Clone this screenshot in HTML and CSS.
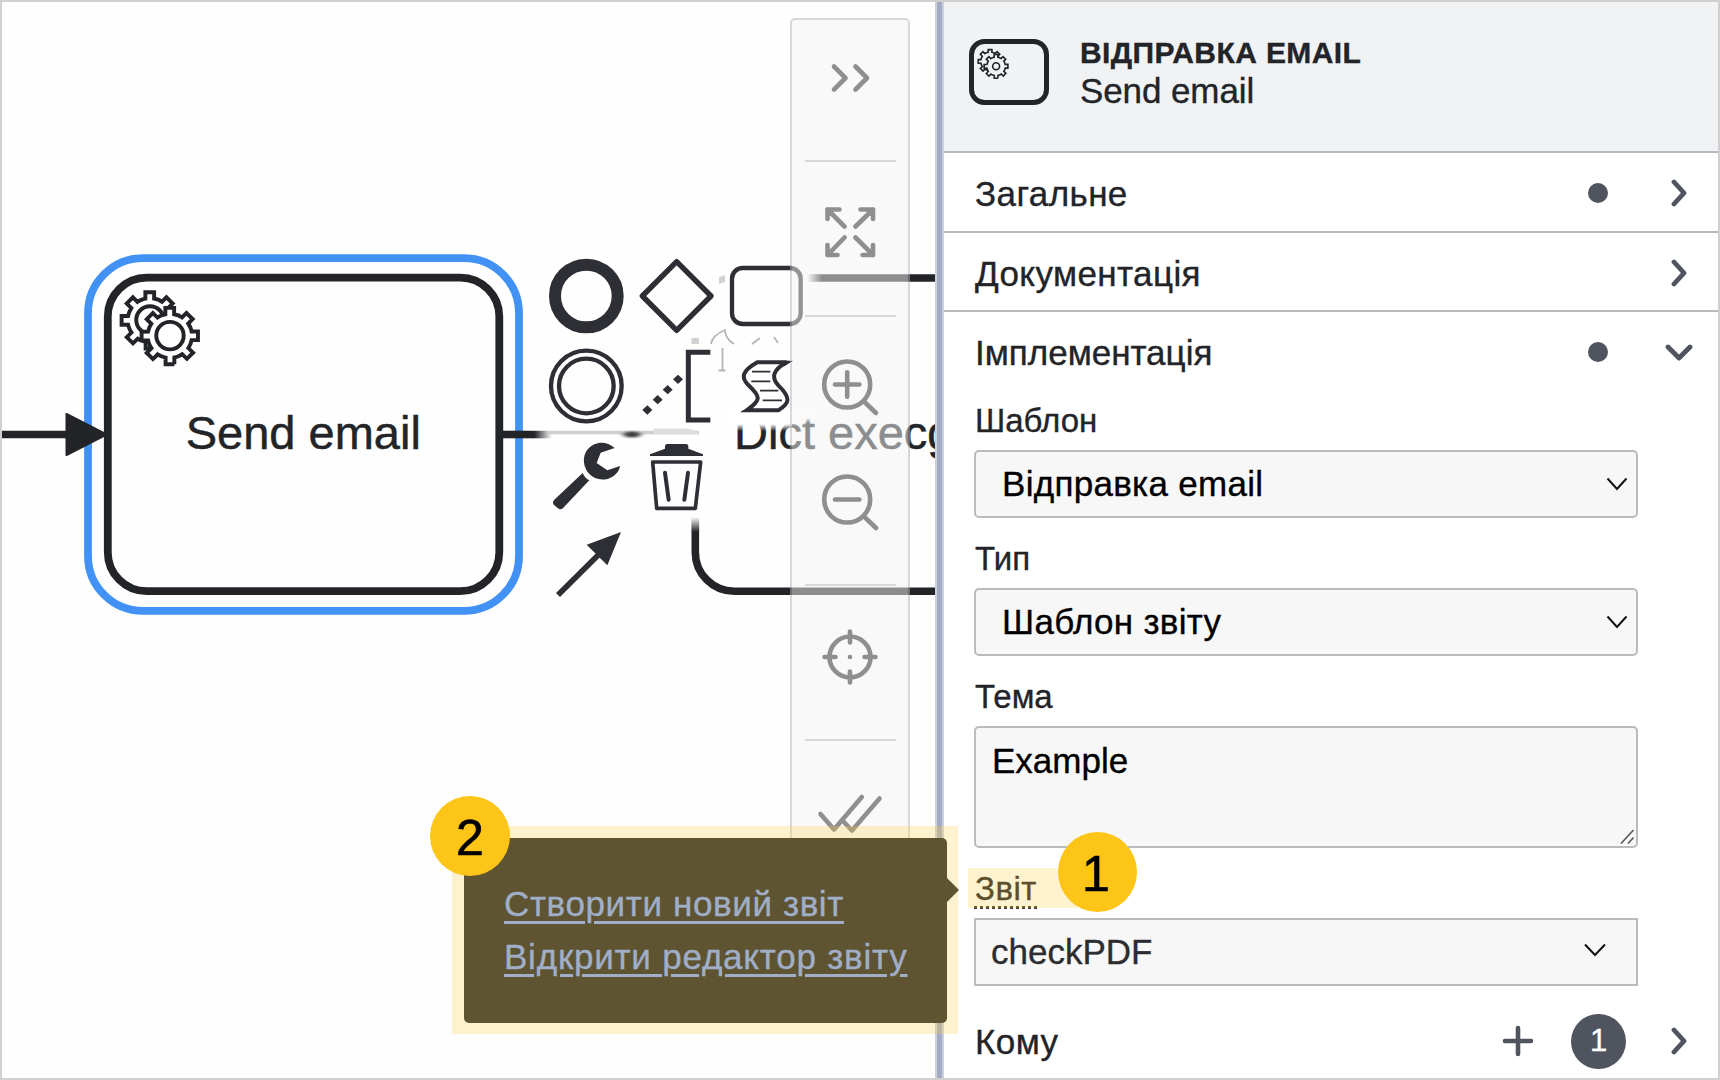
FILE: index.html
```html
<!DOCTYPE html>
<html lang="uk">
<head>
<meta charset="utf-8">
<title>Send email</title>
<link rel="stylesheet" href="styles.css">
</head>
<body>
<div class="frame">
  <main class="canvas">
    <svg class="diagram" viewBox="2 2 933 1076" width="933" height="1076">
      <defs>
        <path id="gear" d="m 12,18 v -1.71335 c 0.352326,-0.0705 0.703932,-0.17838 1.047628,-0.32133 0.344416,-0.14465 0.665822,-0.32133 0.966377,-0.52145 l 1.19431,1.18005 1.567487,-1.57688 -1.195028,-1.18014 c 0.403376,-0.61394 0.683079,-1.29908 0.825447,-2.01824 l 1.622133,-0.01 v -2.2196 l -1.636514,0.01 c -0.07333,-0.35153 -0.178319,-0.70024 -0.323564,-1.04372 -0.145244,-0.34406 -0.321407,-0.6644 -0.522735,-0.96217 l 1.131035,-1.13631 -1.583305,-1.56293 -1.129598,1.13589 c -0.614052,-0.40108 -1.302883,-0.68093 -2.022633,-0.82247 l 0.0093,-1.61852 h -2.241173 l 0.0042,1.63124 c -0.353763,0.0736 -0.705369,0.17977 -1.049785,0.32371 -0.344415,0.14437 -0.665102,0.32092 -0.9635006,0.52006 l -1.1698628,-1.15823 -1.5667691,1.5792 1.1684265,1.15669 c -0.4026573,0.61283 -0.68308,1.29797 -0.8247287,2.01713 l -1.6588041,0.003 v 2.22174 l 1.6724648,-0.006 c 0.073327,0.35077 0.1797598,0.70243 0.3242851,1.04472 0.1452428,0.34448 0.3214064,0.6644 0.5227339,0.96066 l -1.1993431,1.19723 1.5840256,1.56011 1.1964668,-1.19348 c 0.6140517,0.40346 1.3028827,0.68232 2.0233517,0.82331 l 7.19e-4,1.69892 h 2.226848 z"/>
        <linearGradient id="fadeRight"><stop offset="0" stop-color="#222428"/><stop offset=".2" stop-color="#222428"/><stop offset="1" stop-color="#222428" stop-opacity="0"/></linearGradient>
        <linearGradient id="fadeIn"><stop offset="0" stop-color="#222428" stop-opacity="0"/><stop offset="1" stop-color="#222428"/></linearGradient>
        <linearGradient id="fadeDown" x2="0" y2="1"><stop offset="0" stop-color="#222428" stop-opacity="0"/><stop offset="1" stop-color="#222428"/></linearGradient>
        <linearGradient id="veil" x2="0" y2="1"><stop offset="0" stop-color="#fff"/><stop offset=".7" stop-color="#fff"/><stop offset="1" stop-color="#fff" stop-opacity="0"/></linearGradient>
        <radialGradient id="smudge"><stop offset="0" stop-color="#2e2f32"/><stop offset=".4" stop-color="#3a3b3e" stop-opacity=".8"/><stop offset="1" stop-color="#c9c9c9" stop-opacity="0"/></radialGradient>
      </defs>

      <!-- incoming and outgoing flows -->
      <path class="flow" d="M2 434.5H70"/>
      <rect x="88" y="258.2" width="431" height="352.7" rx="55" class="selection"/>
      <path class="solid" d="M66.500 414l40 20.500-40 20.500z" stroke-linejoin="round" stroke="#222428" stroke-width="2"/>
      <rect x="107.800" y="277.600" width="391.500" height="313.600" rx="39" class="task"/>
      <path class="flow" d="M503 434.500H530"/>
      <rect x="530" y="430.800" width="22" height="7.500" fill="url(#fadeRight)"/>
      <path d="M548 432.500H699" stroke="#cfcfcf" stroke-width="3.500"/>
      <path d="M654 428.500H688l10 3v3H654z" fill="#dedede"/>
      <ellipse cx="632" cy="434.500" rx="15" ry="5" fill="url(#smudge)"/>

      <g transform="translate(107.300 278) scale(3.92)" class="gears">
        <use href="#gear"/><circle cx="10.890" cy="10.700" r="3.500"/>
        <g transform="translate(5.100 4)"><use href="#gear"/><circle cx="10.890" cy="10.700" r="3.500"/></g>
      </g>
      <text class="task-name" x="303.300" y="449" text-anchor="middle">Send email</text>

      <!-- following task, partly covered -->
      <path class="flow" d="M822 278H936M695.300 532V552.200A39 39 0 0 0 734.300 591.200H936"/>
      <rect x="807" y="274.200" width="15" height="7.600" fill="url(#fadeIn)"/>
      <rect x="691.400" y="517" width="7.800" height="15" fill="url(#fadeDown)"/>
      <text class="task-name" x="734" y="449">Dict execg</text>
      <rect x="728" y="408" width="64" height="23" fill="url(#veil)"/>
      <rect x="792" y="408" width="13" height="18" fill="url(#veil)"/>
      <rect x="805" y="406" width="12" height="17" fill="url(#veil)"/>
      <path d="M719 277l6-2v7l-6 2zM691.500 338h7.500v6h-7.500z" fill="#d2d2d2"/>
      <path class="trace" d="M711 344c1-7 7-11 14-14 0 6 4 11 9 14M752 344l8-6M774 337l4 6"/>
      <path class="trace" d="M722.500 348v22M718.500 370.500h7"/>

      <!-- context pad -->
      <g transform="translate(530 240) scale(.33333)" class="pad">
        <circle cx="169" cy="168" r="94" stroke-width="36"/>
        <path d="M440 65L543 168 440 271 337 168z" stroke-width="16" stroke-linejoin="round"/>
        <rect x="606" y="84" width="206" height="168" rx="32" stroke-width="13"/>
        <circle cx="169" cy="438" r="106" stroke-width="13"/>
        <circle cx="169" cy="438" r="82" stroke-width="13"/>
        <path d="M541 337H475V540H541" stroke-width="15"/>
        <path class="ink" d="M352 496l15 14-15 14-15-14zM383 465l15 14-15 14-15-14zM413 435l15 14-15 14-15-14zM444 404l15 14-15 14-15-14z"/>
        <path d="M682 367H770C724 392 726 415 745 436C785 475 778 490 745 511H650C695 480 692 470 655 435C632 412 636 393 682 367z" stroke-width="12"/>
        <path class="ink" d="M765 362h25l-30 18zM660 515h-28l32-17z"/>
        <path d="M666 395h55M664 424h57M690 452h55M698 481h58" stroke-width="5"/>
        <path class="ink" d="M254 624C236 608 212 604 193 613C163 626 154 660 168 688C180 714 214 726 240 714C258 706 268 692 270 678L232 691 200 669 212 638z"/>
        <path class="ink" d="M158 699C162 709 168 716 178 721L100 803Q92 812 84 805L72 795Q65 787 73 779z"/>
        <path class="ink" d="M360 643L405 626V617Q406 612 412 612H468Q474 612 475 617V626L519 643V648H360z"/>
        <path d="M368 666H512L496 805H380z" stroke-width="11" stroke-linejoin="round"/>
        <path d="M405 698L416 779M474 698L463 779" stroke-width="12" stroke-linecap="round"/>
        <path d="M84 1065L210 940" stroke-width="17"/>
        <path class="ink" d="M273 876L170 914 232 976z"/>
      </g>
    </svg>

    <nav class="palette">
      <div class="tool tool-first"><svg width="60" height="60" viewBox="820 47 60 60"><path d="M834 66.500l11.500 11.500L834 89.500M855.500 66.500l11.500 11.500-11.500 11.500"/></svg></div>
      <div class="tool"><svg width="60" height="60" viewBox="820.500 203 60 60"><path d="M840 210.500H828V220M828 210.500L845 227.500M861 210.500h12.500V220M873.500 210.500L856 227.500M828 246v10H838M828 256L845 238.500M873.500 246v10H863M873.500 256L856 238.500"/></svg></div>
      <div class="tool tool-zoom">
        <svg width="60" height="60" viewBox="820.500 356.500 60 60"><circle cx="847.700" cy="384" r="23"/><path d="M835.500 384h24.400M847.700 371.800v24.400M865 401.500l11.500 11"/></svg>
        <svg width="60" height="60" viewBox="820.500 471.500 60 60"><circle cx="847.700" cy="499" r="23"/><path d="M835.500 499h24.400M865 516.500l11.500 11"/></svg>
      </div>
      <div class="tool tool-center"><svg width="60" height="60" viewBox="820.500 626.500 60 60"><circle cx="850.500" cy="656.500" r="20.500"/><path d="M825 656.500h11M865 656.500h11M850.500 631v11M850.500 671v11M850.500 656.500h.01"/></svg></div>
      <div class="tool tool-last"><svg width="66" height="60" viewBox="817.500 784 66 60"><path d="M821 814l13.500 15.500 27.800-32.500M842.500 820l10 10.500 27.500-32"/></svg></div>
    </nav>
  </main>

  <div class="splitter"></div>

  <aside class="panel">
    <header class="panel-header">
      <svg class="type-icon" width="80" height="66" viewBox="0 0 80 66">
        <rect x="2.500" y="2.500" width="75" height="61" rx="13"/>
        <g transform="translate(3.200 4.600) scale(1.650)" class="type-gears"><use href="#gear"/><g transform="translate(3.600 3)"><use href="#gear"/><circle cx="10.890" cy="10.700" r="2.100"/></g></g>
      </svg>
      <div class="titles">
        <div class="type">ВІДПРАВКА EMAIL</div>
        <div class="name">Send email</div>
      </div>
    </header>
    <section class="group">
      <span class="group-title">Загальне</span><i class="dot"></i>
      <svg class="chevron" width="28" height="28" viewBox="0 0 28 28"><path d="M9 3l10 11L9 25"/></svg>
    </section>
    <section class="group group-second">
      <span class="group-title">Документація</span>
      <svg class="chevron" width="28" height="28" viewBox="0 0 28 28"><path d="M9 3l10 11L9 25"/></svg>
    </section>
    <section class="group group-open">
      <span class="group-title">Імплементація</span><i class="dot"></i>
      <svg class="chevron" width="28" height="28" viewBox="0 0 28 28"><path d="M3 9l11 11L25 9"/></svg>
    </section>
    <div class="entries">
      <label>Шаблон</label>
      <div class="field select">Відправка email<svg width="22" height="14" viewBox="0 0 22 14"><path d="M1.500 1.500L11 12l9.500-10.500"/></svg></div>
      <label>Тип</label>
      <div class="field select">Шаблон звіту<svg width="22" height="14" viewBox="0 0 22 14"><path d="M1.500 1.500L11 12l9.500-10.500"/></svg></div>
      <label>Тема</label>
      <div class="field area">Example<svg width="16" height="16" viewBox="0 0 16 16"><path d="M2 14.500L14.500 1M9 14.500L14.500 8.500"/></svg></div>
      <label><span class="hinted">Звіт</span></label>
      <div class="field combo">checkPDF<svg width="24" height="18" viewBox="0 0 24 18"><path d="M2 1.500L12 12 22 1.500"/></svg></div>
    </div>
    <section class="group group-list">
      <span class="group-title">Кому</span>
      <svg class="plus" width="32" height="32" viewBox="0 0 32 32"><path d="M16 3v26M3 16h26"/></svg>
      <span class="count">1</span>
      <svg class="chevron" width="28" height="28" viewBox="0 0 28 28"><path d="M9 3l10 11L9 25"/></svg>
    </section>
  </aside>

  <div class="halo"></div>
  <div class="tooltip">
    <a class="link-new">Створити новий звіт</a>
    <a class="link-editor">Відкрити редактор звіту</a>
  </div>
  <div class="mark"></div>
  <div class="step step-two">2</div>
  <div class="step step-one">1</div>
</div>
</body>
</html>
```
FILE: styles.css
```css
* { box-sizing: border-box; }
body { margin: 0; font-family: "Liberation Sans", Arial, sans-serif; color: #222428; }
.frame { position: relative; display: flex; width: 1720px; height: 1080px; border: 2px solid #d0d0d0; background: #fff; overflow: hidden; }

.canvas { position: relative; width: 933px; height: 1076px; overflow: hidden; background: #fefefe; }
.diagram { display: block; }
.flow { fill: none; stroke: #222428; stroke-width: 7.6; }
.solid { fill: #222428; }
.selection { fill: none; stroke: #4292f6; stroke-width: 7.8; }
.task { fill: none; stroke: #222428; stroke-width: 7.8; }
.gears { fill: #fff; stroke: #222428; stroke-width: 1; }
.task-name { font-size: 47px; fill: #222428; stroke: #222428; stroke-width: .5px; }
.trace { fill: none; stroke: #b5b5b5; stroke-width: 1.8; }
.pad { fill: none; stroke: #2d2f34; }
.pad .ink { fill: #2d2f34; stroke: none; }

.palette { position: absolute; left: 788px; top: 16px; width: 120px; height: 860px; padding: 0 12px 0 13px; display: flex; flex-direction: column; border: 2px solid #b4b4b4; border-radius: 5px; background: #f6f6f6; opacity: .5; }
.tool { flex: none; display: flex; flex-direction: column; align-items: center; justify-content: center; height: 155px; padding-right: 2px; border-bottom: 2px solid #b4b4b4; }
.tool-first { height: 142px; padding-bottom: 26px; }
.tool:nth-child(2) { padding-bottom: 13px; }
.tool-zoom { height: 269px; justify-content: flex-start; gap: 55px; padding-top: 40px; }
.tool-center { padding-bottom: 12px; }
.tool-last { border: 0; padding-bottom: 10px; }
.tool svg { flex: none; fill: none; stroke: #222; stroke-width: 4.6; stroke-linecap: round; stroke-linejoin: round; }

.splitter { width: 9px; border: solid #ccd2dd; border-width: 0 2px; background: #a4acc3; }

.panel { display: flex; flex-direction: column; width: 774px; background: #fff; -webkit-text-stroke: .35px; }
.panel-header { flex: none; display: flex; gap: 31px; height: 151px; padding: 37px 0 0 25px; border-bottom: 2px solid #b6b9bd; background: #f1f2f4; }
.type-icon { fill: none; stroke: #222428; stroke-width: 5; }
.type-gears { fill: #f1f2f4; stroke-width: 1; }
.type { margin-top: -1px; font-size: 30px; font-weight: 700; line-height: 30px; letter-spacing: .4px; }
.name { margin-top: 1px; font-size: 35px; line-height: 44px; letter-spacing: -.1px; }
.group { flex: none; display: flex; align-items: center; height: 80px; padding: 2px 25px 0 30px; border-bottom: 2px solid #b6b9bd; font-size: 35px; }
.group-second { height: 79px; }
.group-open { height: 78px; margin-bottom: 2px; border: 0; }
.group-title { flex: 1; padding-top: 2px; padding-left: 1px; letter-spacing: .4px; }
.group-open .group-title { letter-spacing: 0; }
.dot { width: 20px; height: 20px; margin-right: 57px; border-radius: 50%; background: #50545f; }
.chevron { fill: none; stroke: #50545f; stroke-width: 4.8; stroke-linecap: round; stroke-linejoin: round; }
.entries { flex: none; padding: 6px 80px 0 30px; }
.entries label { display: block; height: 52px; padding: 2px 0 0 1px; font-size: 33px; line-height: 42px; }
.field { display: flex; align-items: center; justify-content: space-between; width: 664px; height: 68px; margin-bottom: 18px; border: 2px solid #b9bbbd; border-radius: 5px; background: #f7f7f7; color: #000; font-size: 35px; }
.field svg { fill: none; stroke: #111; stroke-width: 2; }
.select { padding: 0 8px 0 26px; letter-spacing: .3px; }
.area { height: 122px; padding: 13px 1px 1px 16px; align-items: flex-start; }
.area svg { align-self: flex-end; stroke: #555; stroke-width: 1.6; }
.combo { padding: 0 29px 0 15px; border-radius: 0; color: #2c2d31; }
.hinted { display: inline-block; margin-left: -1px; padding-left: 1px; border-bottom: 3px dotted #3f3a2c; line-height: 34px; letter-spacing: .5px; }
.group-list { height: 74px; padding-top: 0; border: 0; }
.plus { margin-right: 37px; fill: none; stroke: #50545f; stroke-width: 4.6; stroke-linecap: round; }
.count { display: flex; align-items: center; justify-content: center; width: 55px; height: 55px; margin-right: 39px; border-radius: 50%; background: #50545f; color: #fff; font-size: 31px; }

.halo { position: absolute; left: 450px; top: 824px; width: 506px; height: 208px; background: rgba(255, 203, 66, .26); }
.tooltip { position: absolute; left: 462px; top: 836px; width: 483px; height: 185px; padding: 39px 40px; display: flex; flex-direction: column; border-radius: 5px; background: #5e5431; }
.tooltip::after { content: ""; position: absolute; left: 483px; top: 40px; border: 12px solid transparent; border-left-color: #5e5431; border-right: 0; }
.tooltip a { align-self: flex-start; height: 53px; line-height: 53px; font-size: 35px; color: #a0aec8; white-space: nowrap; text-decoration: underline; text-decoration-thickness: 3px; text-underline-offset: 5px; -webkit-text-stroke: .35px; }
.link-new { letter-spacing: .63px; }
.link-editor { letter-spacing: .78px; }
.mark { position: absolute; left: 966px; top: 866px; width: 110px; height: 40px; background: rgba(255, 203, 66, .26); }
.step { position: absolute; display: flex; align-items: center; justify-content: center; width: 80px; height: 80px; padding-top: 4px; border-radius: 50%; background: #fdc517; color: #000; font-size: 50px; -webkit-text-stroke: .7px; }
.step-two { left: 428px; top: 794px; }
.step-one { left: 1056px; top: 830px; width: 79px; padding-right: 3px; }
```
